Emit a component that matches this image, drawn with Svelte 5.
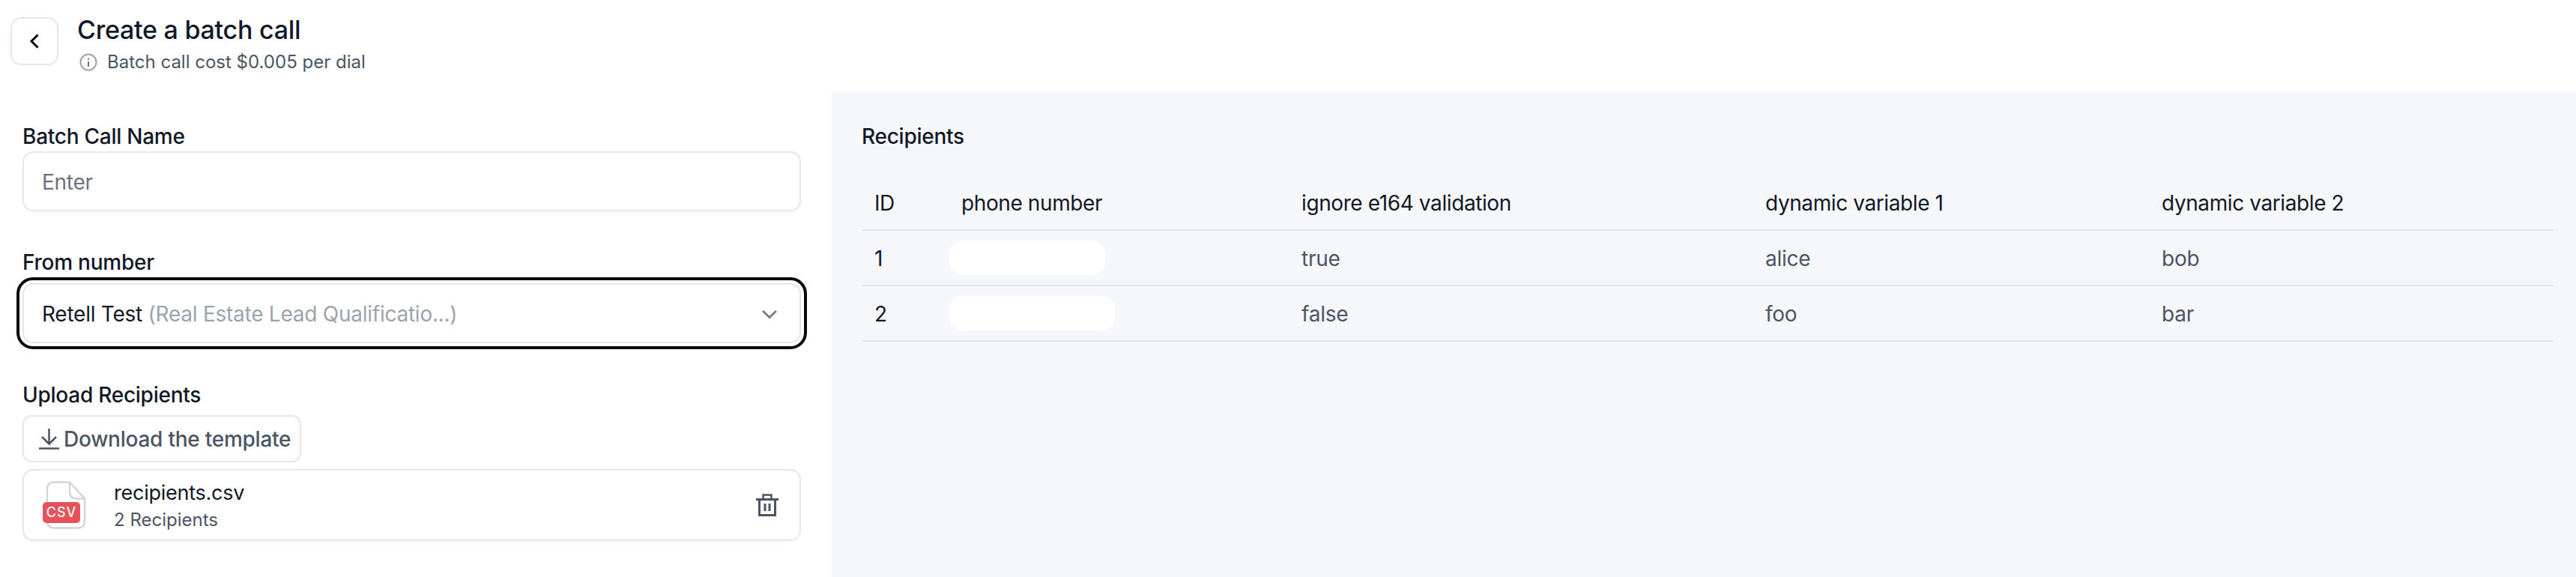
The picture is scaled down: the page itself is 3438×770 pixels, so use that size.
<script lang="ts">
  const columns = ["ID", "phone number", "ignore e164 validation", "dynamic variable 1", "dynamic variable 2"];
  const rows = [
    { id: 1, mask: 208, ignore: "true", var1: "alice", var2: "bob" },
    { id: 2, mask: 221, ignore: "false", var1: "foo", var2: "bar" },
  ];
</script>

<div class="page">
  <header class="top">
    <button class="back" aria-label="Back">
      <svg width="14" height="20" viewBox="0 0 14 20" fill="none" stroke="#0a0a0a" stroke-width="3">
        <path d="M11.5 1.5 3 10l8.5 8.5" />
      </svg>
    </button>
    <div class="heading">
      <h1>Create a batch call</h1>
      <p>
        <svg width="24" height="24" viewBox="0 0 24 24" fill="none" stroke="#9ca3af" stroke-width="2">
          <circle cx="12" cy="12" r="10.5" />
          <path d="M12 11v7" stroke="#6b7280" />
          <path d="M12 6.5v2" stroke="#6b7280" />
        </svg>
        Batch call cost $0.005 per dial
      </p>
    </div>
  </header>

  <main class="body">
    <section class="form">
      <label class="label" for="name">Batch Call Name</label>
      <input id="name" class="input" placeholder="Enter" />

      <div class="label from">From number</div>
      <div class="select">
        <span class="value">Retell Test <span class="muted">(Real Estate Lead Qualificatio...)</span></span>
        <svg width="20" height="11" viewBox="0 0 20 11" fill="none" stroke="#808080" stroke-width="3">
          <path d="M1 1l9 8.500L19 1" />
        </svg>
      </div>

      <div class="label upload">Upload Recipients</div>
      <button class="download">
        <svg width="27" height="28" viewBox="0 0 27 28" fill="none" stroke="#4b5563" stroke-width="2.500">
          <path d="M13.500 0v19M4 11l9.500 9.500L23 11" />
          <path d="M0 26.500h27" />
        </svg>
        Download the template
      </button>
      <div class="file">
        <div class="csv">
          <svg width="58" height="64" viewBox="0 0 58 64" fill="none" stroke="#d1d5db" stroke-width="2.500">
            <path d="M14 1.500h22l20 22v31a8 8 0 0 1-8 8H14a8 8 0 0 1-8-8v-45a8 8 0 0 1 8-8z" />
            <path d="M36 1.500v14a8 8 0 0 0 8 8h12" />
          </svg>
          <span class="badge">CSV</span>
        </div>
        <div class="file-text">
          <div class="file-name">recipients.csv</div>
          <div class="file-sub">2 Recipients</div>
        </div>
        <svg class="trash" width="30" height="30" viewBox="0 0 30 30" fill="none" stroke="#4b5563" stroke-width="3">
          <path d="M0 7.500h30" />
          <path d="M4.500 7.500v21h21v-21" />
          <path d="M9.500 7.500v-6h11v6" stroke-width="2.500" />
          <path d="M12 13v10M18 13v10" />
        </svg>
      </div>
    </section>

    <section class="panel">
      <h2>Recipients</h2>
      <table>
        <colgroup>
          <col style="width:116px" />
          <col style="width:454px" />
          <col style="width:619px" />
          <col style="width:529px" />
          <col />
        </colgroup>
        <thead>
          <tr>
            {#each columns as col}
              <th>{col}</th>
            {/each}
          </tr>
        </thead>
        <tbody>
          {#each rows as row}
            <tr>
              <td class="id">{row.id}</td>
              <td><span class="mask" style="width:{row.mask}px"></span></td>
              <td>{row.ignore}</td>
              <td>{row.var1}</td>
              <td>{row.var2}</td>
            </tr>
          {/each}
        </tbody>
      </table>
    </section>
  </main>
</div>

<style>
  :global(body) {
    margin: 0;
    background: #fff;
  }

  .page {
    width: 3438px;
    height: 770px;
    display: flex;
    flex-direction: column;
    overflow: hidden;
    font-family: Inter, "Liberation Sans", sans-serif;
    color: #111827;
    letter-spacing: -0.25px;
  }

  .top {
    height: 122px;
    flex: none;
    display: flex;
    align-items: flex-start;
    gap: 25px;
    padding-left: 14px;
  }

  .back {
    width: 64px;
    height: 64px;
    margin-top: 23px;
    padding: 0;
    display: flex;
    align-items: center;
    justify-content: center;
    background: #fff;
    border: 2px solid #e5e7eb;
    border-radius: 14px;
  }

  .heading {
    padding-top: 20px;
  }

  h1 {
    margin: 0;
    font-size: 34px;
    line-height: 40px;
    font-weight: 500;
  }

  .heading p {
    margin: 8px 0 0 3px;
    display: flex;
    align-items: center;
    gap: 13px;
    font-size: 24px;
    line-height: 30px;
    letter-spacing: 0;
    color: #4b5563;
  }

  .body {
    flex: 1;
    display: flex;
    min-height: 0;
  }

  .form {
    width: 1110px;
    flex: none;
    box-sizing: border-box;
    padding: 40px 41px 0 30px;
  }

  .label {
    display: block;
    font-size: 28px;
    line-height: 40px;
    font-weight: 500;
  }

  .from {
    margin-top: 48px;
  }

  .upload {
    margin-top: 49px;
  }

  .input,
  .select {
    width: 100%;
    height: 80px;
    box-sizing: border-box;
    padding: 2px 26px 0 24px;
    background: #fff;
    border: 2px solid #e5e7eb;
    border-radius: 14px;
    font: 400 28px Inter, "Liberation Sans", sans-serif;
    letter-spacing: -0.25px;
  }

  .input::placeholder {
    color: #6b7280;
    opacity: 1;
  }

  .select {
    margin-top: 8px;
    display: flex;
    align-items: center;
    justify-content: space-between;
    padding-right: 30px;
    color: #111827;
    outline: 4px solid #0a0a0a;
    outline-offset: 4px;
  }

  .muted {
    color: #9ca3af;
  }

  .download {
    margin-top: 7px;
    height: 63px;
    width: 372px;
    box-sizing: border-box;
    padding: 0 0 0 20px;
    display: flex;
    align-items: center;
    gap: 6px;
    background: #fff;
    border: 2px solid #e5e7eb;
    border-radius: 12px;
    color: #4b5563;
    font: 500 28px Inter, "Liberation Sans", sans-serif;
    letter-spacing: -0.25px;
  }

  .file {
    margin-top: 9px;
    height: 96px;
    box-sizing: border-box;
    display: flex;
    align-items: center;
    padding: 0 28px 0 25px;
    border: 2px solid #e5e7eb;
    border-radius: 14px;
  }

  .csv {
    position: relative;
    width: 58px;
    height: 64px;
    margin-right: 37px;
    flex: none;
  }

  .csv svg {
    display: block;
  }

  .badge {
    position: absolute;
    left: 0;
    top: 28px;
    width: 50px;
    height: 28px;
    border-radius: 5px;
    background: #e9505a;
    color: #fff;
    font-size: 18px;
    line-height: 28px;
    font-weight: 500;
    letter-spacing: 1px;
    text-align: center;
  }

  .file-text {
    flex: 1;
  }

  .file-name {
    font-size: 27px;
    line-height: 36px;
    margin-top: 2px;
  }

  .file-sub {
    font-size: 24px;
    line-height: 32px;
    margin-top: 2px;
    letter-spacing: 0;
    color: #4b5563;
  }

  .panel {
    flex: 1;
    min-width: 0;
    box-sizing: border-box;
    padding: 40px 30px 0 40px;
    background: #f6f7fb;
  }

  h2 {
    margin: 0 0 31px;
    font-size: 28px;
    line-height: 40px;
    font-weight: 500;
  }

  table {
    width: 100%;
    table-layout: fixed;
    border-collapse: collapse;
  }

  th,
  td {
    height: 74px;
    padding: 2px 0 0 17px;
    box-sizing: border-box;
    border-bottom: 2px solid #e5e7eb;
    text-align: left;
    font-size: 28px;
    font-weight: 400;
  }

  th {
    color: #111827;
    letter-spacing: -0.4px;
  }

  td {
    color: #4b5563;
  }

  td.id {
    color: #111827;
  }

  .mask {
    display: block;
    height: 46px;
    margin-left: -16px;
    margin-top: -2px;
    background: #fff;
    border-radius: 18px;
  }
</style>
